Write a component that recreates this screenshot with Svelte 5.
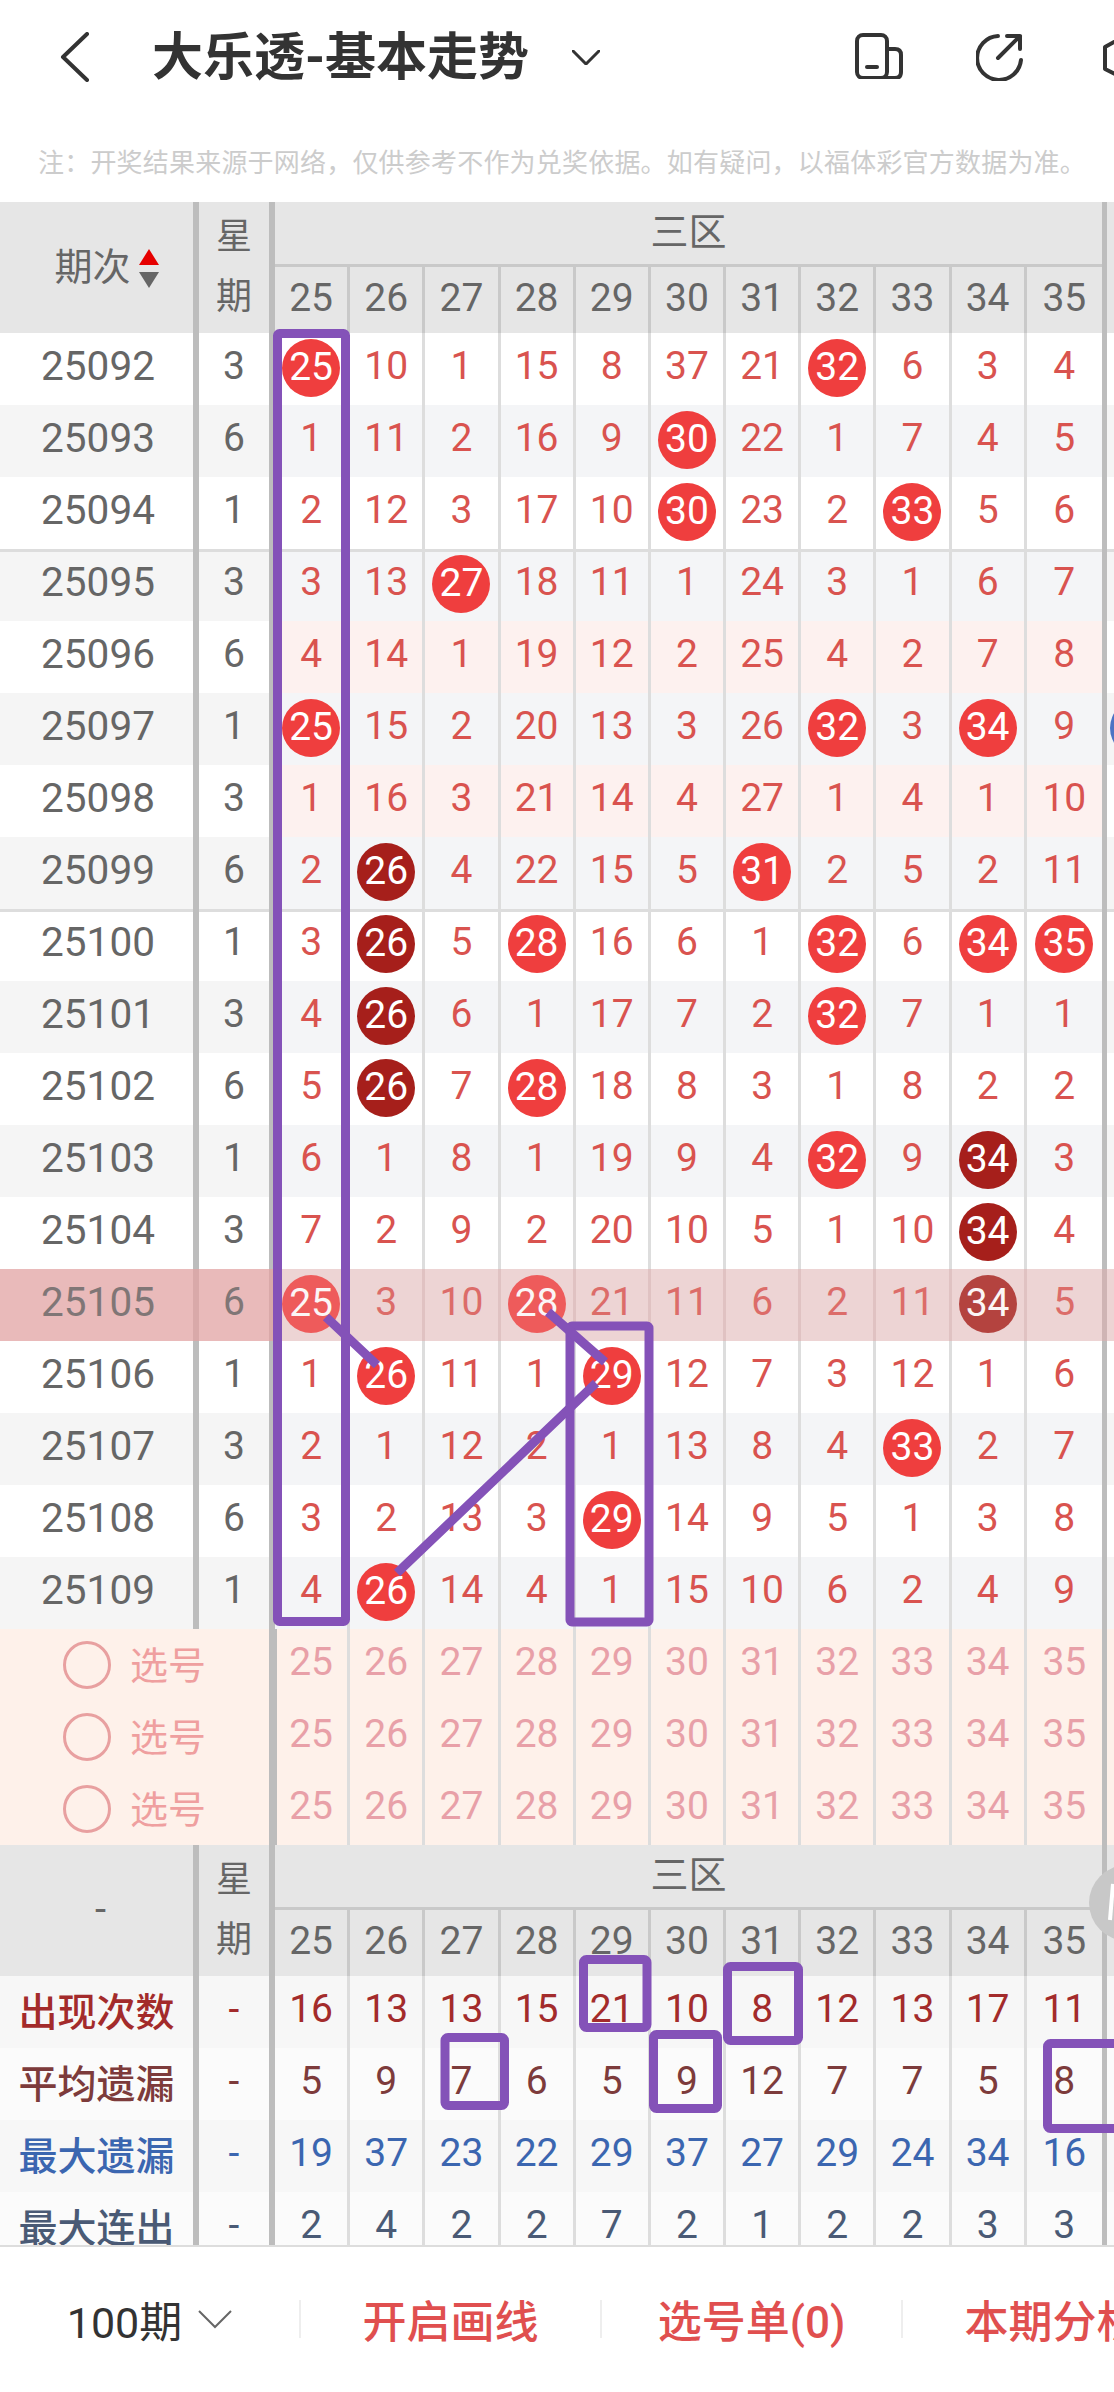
<script>
  const cols = [25, 26, 27, 28, 29, 30, 31, 32, 33, 34, 35];

  const draws = [
    [25092, 3, "25* 10 1 15 8 37 21 32* 6 3 4"],
    [25093, 6, "1 11 2 16 9 30* 22 1 7 4 5"],
    [25094, 1, "2 12 3 17 10 30* 23 2 33* 5 6"],
    [25095, 3, "3 13 27* 18 11 1 24 3 1 6 7"],
    [25096, 6, "4 14 1 19 12 2 25 4 2 7 8"],
    [25097, 1, "25* 15 2 20 13 3 26 32* 3 34* 9"],
    [25098, 3, "1 16 3 21 14 4 27 1 4 1 10"],
    [25099, 6, "2 26d 4 22 15 5 31* 2 5 2 11"],
    [25100, 1, "3 26d 5 28* 16 6 1 32* 6 34* 35*"],
    [25101, 3, "4 26d 6 1 17 7 2 32* 7 1 1"],
    [25102, 6, "5 26d 7 28* 18 8 3 1 8 2 2"],
    [25103, 1, "6 1 8 1 19 9 4 32* 9 34d 3"],
    [25104, 3, "7 2 9 2 20 10 5 1 10 34d 4"],
    [25105, 6, "25* 3 10 28* 21 11 6 2 11 34d 5"],
    [25106, 1, "1 26* 11 1 29* 12 7 3 12 1 6"],
    [25107, 3, "2 1 12 2 1 13 8 4 33* 2 7"],
    [25108, 6, "3 2 13 3 29* 14 9 5 1 3 8"],
    [25109, 1, "4 26* 14 4 1 15 10 6 2 4 9"],
  ];

  const stats = [
    ["出现次数", "s1", "16 13 13 15 21 10 8 12 13 17 11"],
    ["平均遗漏", "s2", "5 9 7 6 5 9 12 7 7 5 8"],
    ["最大遗漏", "s3", "19 37 23 22 29 37 27 29 24 34 16"],
    ["最大连出", "s4", "2 4 2 2 7 2 1 2 2 3 3"],
  ];

  const boxes = [
    [583.5, 1959.5, 63.5, 68],
    [727.5, 1966.5, 71, 74],
    [445, 2037.5, 59.5, 68],
    [653.5, 2034.5, 64, 74],
    [1047.5, 2043.5, 90, 85],
  ];

  function cells(str) {
    return str.split(" ").map((s) => ({
      n: parseInt(s),
      hit: s.endsWith("*"),
      dark: s.endsWith("d"),
    }));
  }

  function rowClass(id) {
    if (id === 25105) return "hl";
    let cls = (id - 25092) % 2 === 1 ? "gray" : "";
    if (id === 25096 || id === 25098) cls = "pink";
    if (id === 25095 || id === 25100) cls += " line";
    return cls;
  }
</script>

<div class="page">
  <div class="top">
    <header>
      <svg class="back" viewBox="0 0 30 50" width="30" height="50">
        <path d="M27 2 3 25l24 23" />
      </svg>
      <h1>大乐透-基本走势</h1>
      <svg class="caret" viewBox="0 0 28 15" width="28" height="15">
        <path d="M1 1l13 13L27 1" />
      </svg>
      <div class="actions">
        <svg viewBox="0 0 48 46" width="48" height="46">
          <rect x="2" y="2" width="30" height="43" rx="6" />
          <path d="M32 16h8q6 0 6 6v17q0 6-6 6H26" />
          <path d="M12 34h10" />
        </svg>
        <svg viewBox="0 0 48 48" width="48" height="48">
          <path d="M22 3a22 22 0 1 0 23 24" />
          <path d="M22 25 44 3M31 3h13v13" />
        </svg>
        <svg viewBox="0 0 48 48" width="48" height="48">
          <path d="M24 3 44 14v22L24 46 4 36V14z" />
        </svg>
      </div>
    </header>
    <p class="note">注：开奖结果来源于网络，仅供参考不作为兑奖依据。如有疑问，以福体彩官方数据为准。</p>
  </div>

  <div class="table">
    <div class="head">
      <div class="per"><span>期次</span>
        <span class="sort"><i class="up"></i><i class="down"></i></span>
      </div>
      <div class="sep"></div>
      <div class="wk vert"><span>星</span><span>期</span></div>
      <div class="sep2"></div>
      <div class="zone">
        <div class="zone-name">三区</div>
        <div class="nums">
          {#each cols as c}<div class="cell">{c}</div>{/each}
        </div>
      </div>
      <div class="sep3"></div>
    </div>

    {#each draws as [id, wk, vals]}
      <div class="row {rowClass(id)}">
        <div class="per"><span>{id}</span></div>
        <div class="sep"></div>
        <div class="wk"><span>{wk}</span></div>
        <div class="sep2"></div>
        <div class="nums">
          {#each cells(vals) as c}
            <div class="cell">
              {#if c.hit || c.dark}
                <span class="ball" class:dark={c.dark}>{c.n}</span>
              {:else}
                <span>{c.n}</span>
              {/if}
            </div>
          {/each}
        </div>
        <div class="sep3"></div>
        <div class="rest">
          {#if id === 25097}<i class="next"></i>{/if}
        </div>
      </div>
    {/each}

    {#each [0, 1, 2] as i}
      <div class="row sel" data-row={i}>
        <div class="pick"><i></i><span>选号</span></div>
        <div class="sep2"></div>
        <div class="nums">
          {#each cols as c}<div class="cell"><span>{c}</span></div>{/each}
        </div>
        <div class="sep3"></div>
      </div>
    {/each}

    <div class="head">
      <div class="per dash"><span>-</span></div>
      <div class="sep"></div>
      <div class="wk vert"><span>星</span><span>期</span></div>
      <div class="sep2"></div>
      <div class="zone">
        <div class="zone-name">三区</div>
        <div class="nums">
          {#each cols as c}<div class="cell">{c}</div>{/each}
        </div>
      </div>
      <div class="sep3"></div>
    </div>

    {#each stats as [label, cls, vals]}
      <div class="row stat {cls}">
        <div class="per"><span>{label}</span></div>
        <div class="sep"></div>
        <div class="wk"><span>-</span></div>
        <div class="sep2"></div>
        <div class="nums">
          {#each vals.split(" ") as v}<div class="cell"><span>{v}</span></div>{/each}
        </div>
        <div class="sep3"></div>
      </div>
    {/each}
  </div>

  <footer>
    <div class="tab range">100期
      <svg viewBox="0 0 34 20" width="34" height="20"><path d="M1 2l16 16L33 2" /></svg>
    </div>
    <div class="tab">开启画线</div>
    <div class="tab">选号单(0)</div>
    <div class="tab">本期分析</div>
  </footer>

  <!-- hand drawn marks on top of the chart -->
  <svg class="marks" viewBox="0 0 1114 2392" width="1114" height="2392">
    <circle class="knob" cx="1127" cy="1903" r="38" />
    <path class="knob-mark" d="M1113 1884l-3 36" />
    <rect x="277.5" y="333.5" width="68" height="1288" rx="2" />
    <rect x="570" y="1326" width="79" height="296" rx="2" />
    {#each boxes as [x, y, w, h]}
      <rect {x} {y} width={w} height={h} rx="3" />
    {/each}
    <path d="M326 1317l51 48M548 1312l57 50M596 1383 397 1573" />
  </svg>
</div>

<style>
  :global(body) {
    margin: 0;
    background: #fff;
  }

  .page {
    position: relative;
    display: flex;
    flex-direction: column;
    width: 1114px;
    height: 2392px;
    overflow: hidden;
    font-family: Roboto, "Noto Sans CJK SC", sans-serif;
    color: #666;
  }

  .top {
    height: 202px;
    flex: none;
  }

  header {
    display: flex;
    align-items: center;
    height: 114px;
    padding-left: 60px;
  }

  svg path,
  svg rect {
    fill: none;
  }

  header svg path,
  header svg rect {
    stroke: #333;
    stroke-width: 4;
    stroke-linecap: round;
    stroke-linejoin: round;
  }

  .back {
    flex: none;
  }

  h1 {
    flex: none;
    width: 375px;
    margin: 0 0 8px 62px;
    font-size: 51px;
    font-weight: 700;
    color: #333;
    white-space: nowrap;
  }

  .caret {
    flex: none;
    margin-left: 45px;
  }

  header .caret path {
    stroke-width: 3;
  }

  .actions {
    display: flex;
    flex: none;
    gap: 73px;
    margin-left: 255px;
  }

  .actions svg {
    flex: none;
  }

  .actions svg:last-child {
    margin-left: 4px;
  }

  .note {
    margin: 0;
    padding: 34px 0 0 38px;
    font-size: 26px;
    line-height: 30px;
    letter-spacing: 0.2px;
    color: #ccc;
    white-space: nowrap;
  }

  .table {
    flex: 1;
    min-height: 0;
    overflow: hidden;
  }

  .head,
  .row {
    display: flex;
    width: 1114px;
  }

  .head {
    height: 131px;
    background: #e6e6e6;
  }

  .row {
    height: 72px;
    background: #fff;
    font-size: 39px;
  }

  .row .per span,
  .row .wk span,
  .row .cell span:not(.ball),
  .pick span {
    margin-bottom: 6px;
  }

  .per {
    display: flex;
    flex: none;
    align-items: center;
    justify-content: center;
    box-sizing: border-box;
    width: 193px;
    padding-left: 3px;
    font-size: 40.5px;
  }

  .head .per {
    gap: 8px;
    padding: 0 0 8px 20px;
    font-size: 38px;
  }

  .head .per.dash {
    padding: 0 0 3px 8px;
    font-size: 40px;
  }

  .sort {
    display: flex;
    flex-direction: column;
    gap: 7px;
    margin-top: 10px;
  }

  .sort i {
    display: block;
    width: 0;
    height: 0;
    border-left: 10px solid transparent;
    border-right: 10px solid transparent;
  }

  .sort .up {
    border-bottom: 16px solid #e60000;
  }

  .sort .down {
    border-top: 16px solid #666;
  }

  .sep {
    flex: none;
    width: 6px;
    background: #bdbdbd;
  }

  .sep2 {
    flex: none;
    width: 6px;
    background: #bdbdbd;
  }

  .sep3 {
    flex: none;
    width: 5px;
    background: #bdbdbd;
  }

  .wk {
    display: flex;
    flex: none;
    align-items: center;
    justify-content: center;
    width: 70px;
  }

  .wk.vert {
    flex-direction: column;
    gap: 14px;
    padding-bottom: 2px;
    box-sizing: border-box;
    font-size: 36px;
    line-height: 46px;
  }

  .zone {
    display: flex;
    flex-direction: column;
    flex: none;
    width: 827px;
  }

  .zone-name {
    height: 62px;
    font-size: 38px;
    line-height: 60px;
    text-align: center;
    border-bottom: 3px solid #c9c9c9;
  }

  .nums {
    display: grid;
    flex: none;
    grid-template-columns: repeat(11, 75.18px);
    width: 827px;
  }

  .head .nums {
    flex: 1;
    font-size: 39px;
  }

  .cell {
    display: flex;
    align-items: center;
    justify-content: center;
    box-sizing: border-box;
    border-right: 3px solid #ddd;
    color: #d9534f;
  }

  .cell:last-child {
    border-right: 0;
  }

  .head .cell {
    color: #666;
    border-right-color: #c9c9c9;
    padding-bottom: 4px;
  }

  .ball {
    display: flex;
    flex: none;
    align-items: center;
    justify-content: center;
    box-sizing: border-box;
    width: 58px;
    height: 58px;
    margin-bottom: 2px;
    padding-bottom: 3px;
    border-radius: 50%;
    background: #ef3e3e;
    color: #fff;
  }

  .ball.dark {
    background: #a61f1b;
  }

  .rest {
    position: relative;
    flex: 1;
  }

  .next {
    position: absolute;
    left: 3px;
    top: 6px;
    width: 58px;
    height: 58px;
    border-radius: 50%;
    background: #4d74c4;
  }

  .row.gray {
    background: #f5f5f5;
  }

  .row.gray .nums {
    background: #f4f5f7;
  }

  .row.pink .nums {
    background: #fdf1ef;
  }

  .row.line .per,
  .row.line .wk,
  .row.line .cell,
  .row.line .rest {
    box-shadow: inset 0 3px 0 #ddd;
  }

  .row.hl {
    background: #edd4d4;
  }

  .row.hl .per,
  .row.hl .wk {
    background: #e9baba;
  }

  .row.hl .sep,
  .row.hl .sep2 {
    background: #d9a9a9;
  }

  .row.hl .sep3 {
    background: #cfb4b4;
  }

  .row.hl .cell {
    border-right-color: #e0c2c2;
  }

  .row.hl span {
    opacity: 0.8;
  }

  .row.sel {
    background: #fef1ea;
  }

  .pick {
    display: flex;
    flex: none;
    align-items: center;
    box-sizing: border-box;
    width: 269px;
    padding-left: 63px;
    gap: 19px;
    font-size: 38px;
    color: #ef9f9f;
  }

  .pick i {
    width: 48px;
    height: 48px;
    box-sizing: border-box;
    border: 3px solid #e8a0a0;
    border-radius: 50%;
  }

  .sel .cell {
    color: #e8a0a8;
  }

  .sel .cell:first-child {
    border-left: 2px solid #bdbdbd;
    padding-right: 2px;
  }

  .stat {
    background: #f7f7f7;
  }

  .stat .per {
    padding-left: 0;
    font-size: 39px;
    font-weight: 500;
  }

  .stat.s2,
  .stat.s4 {
    background: #fbfbfb;
  }

  .stat .cell,
  .stat .wk,
  .stat .per {
    color: inherit;
  }

  .stat.s1 {
    color: #a32b2b;
  }

  .stat.s2 {
    color: #7d3b3b;
  }

  .stat.s3 {
    color: #3b66b0;
  }

  .stat.s4 {
    color: #4a5a75;
  }

  footer {
    display: flex;
    flex: none;
    align-items: center;
    height: 147px;
    box-sizing: border-box;
    border-top: 2px solid #ddd;
    padding-bottom: 2px;
    background: #fff;
  }

  .tab {
    display: flex;
    flex: none;
    align-items: center;
    justify-content: center;
    box-sizing: border-box;
    width: 301px;
    height: 38px;
    border-right: 2px solid #eee;
    font-size: 44px;
    font-weight: 500;
    color: #e04f4f;
    white-space: nowrap;
  }

  .tab.range {
    gap: 16px;
    font-size: 43px;
    font-weight: 400;
    color: #333;
  }

  .tab.range path {
    stroke: #666;
    stroke-width: 2;
  }

  .marks {
    position: absolute;
    left: 0;
    top: 0;
    pointer-events: none;
  }

  .marks rect,
  .marks > path {
    fill: none;
    stroke: #8452b8;
    stroke-width: 9;
  }

  .marks .knob {
    fill: #c8c8c8;
  }

  .marks .knob-mark {
    stroke: #fff;
    stroke-width: 4;
  }
</style>
